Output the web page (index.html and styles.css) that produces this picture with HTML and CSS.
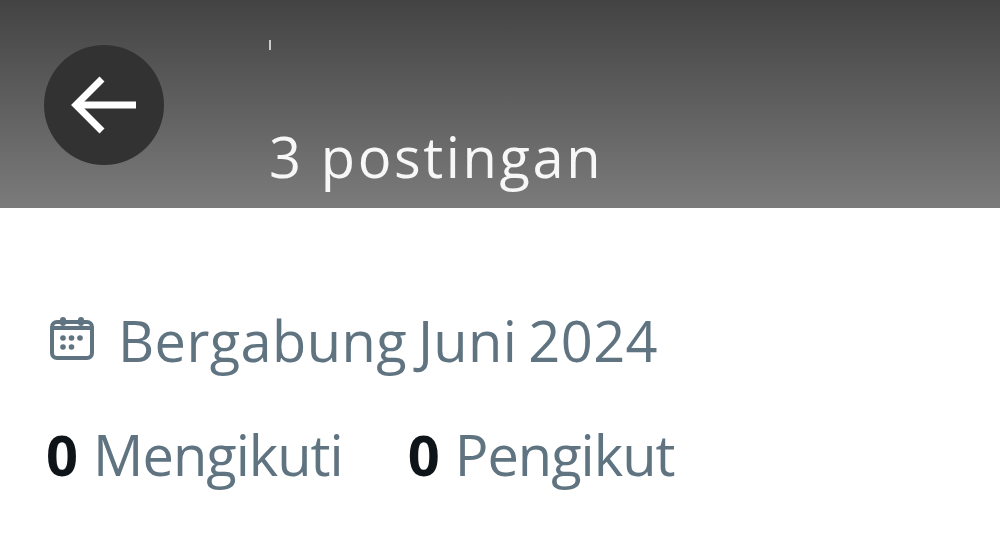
FILE: index.html
```html
<!DOCTYPE html>
<html lang="id">
<head>
    <meta charset="UTF-8">
    <title>Profil</title>
    <link rel="stylesheet" href="styles.css">
</head>
<body>
    <header class="topbar">
        <button class="back" type="button" aria-label="Kembali">
            <svg width="68" height="58" viewBox="0 0 68 58" fill="none" stroke="#fff" stroke-width="7">
                <path d="M66 29H7"/>
                <path d="M32 3L6 29L32 55"/>
            </svg>
        </button>
        <div class="title">
            <span class="tick"></span>
            <div class="count">3 postingan</div>
        </div>
    </header>
    <main class="info">
        <div class="joined">
            <svg class="cal" width="44" height="46" viewBox="0 0 44 46">
                <rect x="2" y="5" width="40" height="36" rx="5" fill="none" stroke="#5f7380" stroke-width="4"/>
                <path d="M2 11H42" stroke="#5f7380" stroke-width="4"/>
                <rect x="10" y="0" width="6" height="9" rx="3" fill="#5f7380"/>
                <rect x="28" y="0" width="6" height="9" rx="3" fill="#5f7380"/>
                <g fill="#5f7380">
                    <circle cx="13" cy="21" r="2.8"/>
                    <circle cx="21.5" cy="21" r="2.8"/>
                    <circle cx="30" cy="21" r="2.8"/>
                    <circle cx="13" cy="30" r="2.8"/>
                    <circle cx="21.5" cy="30" r="2.8"/>
                </g>
            </svg>
            <span>Bergabung Juni 2024</span>
        </div>
        <div class="stats">
            <span class="stat"><b>0</b> Mengikuti</span>
            <span class="stat"><b>0</b> Pengikut</span>
        </div>
    </main>
</body>
</html>
```

FILE: styles.css
```css
* { box-sizing: border-box; }
html, body { margin: 0; height: 100%; }
body { width: 1000px; height: 560px; overflow: hidden; background: #fff; font-family: "Open Sans", sans-serif; }

.topbar { display: flex; height: 208px; padding: 45px 0 0 44px; background: linear-gradient(#434343, #7b7b7b); }
.back { display: flex; align-items: center; justify-content: center; width: 120px; height: 120px; padding: 0; border: none; border-radius: 50%; background: #323232; }
.title { margin-left: 105px; margin-top: -5px; }
.tick { display: block; width: 2px; height: 10px; background: #ccc; }
.count { margin-top: 68px; color: #f7f7f7; font-size: 56px; font-weight: 500; line-height: 76px; letter-spacing: 2.6px; white-space: nowrap; }

.info { padding: 94px 0 0 46px; color: #5f7380; font-size: 56px; font-weight: 500; line-height: 76px; }
.joined { display: flex; align-items: center; gap: 24px; padding-left: 4px; letter-spacing: 0.4px; word-spacing: -4px; }
.stats { display: flex; gap: 65px; margin-top: 38px; letter-spacing: -1px; }
.stat { white-space: nowrap; word-spacing: 2.5px; }
.stat b { color: #0f1419; }
```
